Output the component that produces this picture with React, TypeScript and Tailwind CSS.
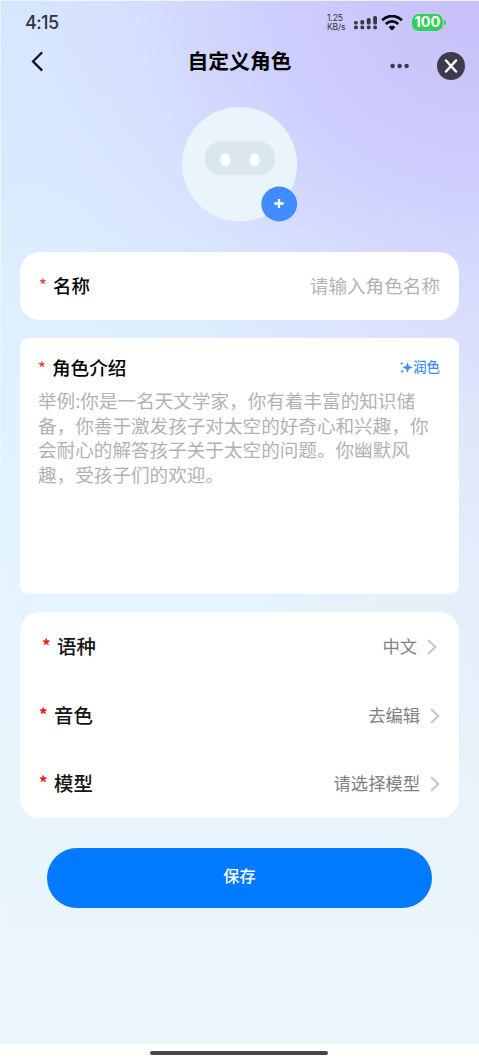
import { Fragment } from 'react';

interface OptionRow {
  label: string;
  value: string;
  rowClass: string;
}

const OPTIONS: OptionRow[] = [
  { label: '语种', value: '中文', rowClass: 'pl-[22px] pr-[22px]' },
  { label: '音色', value: '去编辑', rowClass: 'pl-[19px] pr-[19px] pt-px' },
  { label: '模型', value: '请选择模型', rowClass: 'pl-[19px] pr-[19px]' }
];

const SIGNAL_TOPS = [6, 5, 3, 1];

function StatusBar() {
  return (
    <div className="flex h-[43px] items-center pl-6 pr-[33px] text-[#30343f]">
      <span className="font-['Inter'] text-[18px] font-medium leading-none tracking-[-0.6px]">4:15</span>
      <div className="ml-auto flex items-center">
        <div className="w-[20px] font-['Inter'] text-[8.5px] leading-[8.5px] tracking-[-0.1px]">
          <div>1.25</div>
          <div>KB/s</div>
        </div>
        <svg className="ml-[7px]" width="23" height="15" viewBox="0 0 23 15">
          {SIGNAL_TOPS.map((top, i) => (
            <Fragment key={top}>
              <rect x={i * 6.4} y={top} width="3.8" height={9.5 - top} rx="1.5" fill="#35374a" />
              <rect x={i * 6.4} y="10.4" width="3.8" height="3.8" rx="1.5" fill="#35374a" />
            </Fragment>
          ))}
        </svg>
        <svg className="ml-[4px]" width="22" height="16" viewBox="0 0 22 16" fill="none" stroke="#07080d">
          <path d="M1.2 5.2C6.8 -.2 15.2 -.2 20.8 5.2" strokeWidth="2.9" />
          <path d="M4.8 9C8.4 5.6 13.6 5.6 17.2 9" strokeWidth="2.7" />
          <path d="M7.6 12.2c1.9-1.9 4.9-1.9 6.8 0L11 15.6Z" fill="#07080d" stroke="none" />
        </svg>
        <div className="ml-[9px] flex h-[17px] w-[31px] items-center justify-center rounded-[7px] bg-[#30d158] font-['Inter'] text-[14.5px] font-bold leading-none text-white">
          100
        </div>
        <div className="ml-px h-[5px] w-[2px] rounded-r-full bg-[#30d158]" />
      </div>
    </div>
  );
}

function NavBar() {
  return (
    <div className="grid h-[46px] grid-cols-[1fr_auto_1fr] items-start">
      <svg className="ml-[30px] mt-[7px]" width="13" height="21" viewBox="0 0 13 21" fill="none" stroke="#101114" strokeWidth="2.2">
        <path d="M11.2 1.2L2 10.4L11.2 19.6" />
      </svg>
      <h1 className="-ml-px mt-[2px] text-[20.8px] font-bold leading-[28px] text-black">自定义角色</h1>
      <div className="mt-[8px] flex items-center justify-end pr-[14px]">
        <svg width="20" height="6" viewBox="0 0 20 6" fill="#393a49">
          <circle cx="2.6" cy="3" r="2.2" />
          <circle cx="9.6" cy="3" r="2.2" />
          <circle cx="16.6" cy="3" r="2.2" />
        </svg>
        <button className="ml-[27px] flex h-[28px] w-[28px] items-center justify-center rounded-full bg-[#3c3b4c]" type="button">
          <svg width="14" height="14" viewBox="0 0 14 14" fill="none" stroke="#fff" strokeWidth="2.5" strokeLinecap="round">
            <path d="M2 1.500L12 12.500M12 1.500L2 12.500" />
          </svg>
        </button>
      </div>
    </div>
  );
}

function Avatar() {
  return (
    <svg className="ml-[181px] mt-[17px] block" width="116" height="115" viewBox="0 0 116 115">
      <ellipse cx="57.5" cy="57.2" rx="57.5" ry="57.2" fill="#eaf4fb" />
      <rect x="23" y="34.5" width="70" height="34" rx="16" fill="#dae7ed" />
      <ellipse cx="43.2" cy="52.7" rx="5.2" ry="6.5" fill="#fff" />
      <ellipse cx="72.8" cy="52.7" rx="5.2" ry="6.5" fill="#fff" />
      <ellipse cx="97.2" cy="97" rx="17.9" ry="17.4" fill="#418cff" />
      <path d="M97 91.9V101.1M92.4 96.5H101.6" stroke="#fff" strokeWidth="2.3" />
    </svg>
  );
}

export default function App() {
  return (
    <div className="flex h-[1064px] w-[479px] flex-col overflow-hidden bg-white font-['Noto_Sans_CJK_SC',sans-serif]">
      <main className="h-[1044px] border-l border-t border-[#edf4ff] bg-[radial-gradient(ellipse_540px_500px_at_100%_0%,#c7bff9_0%,rgba(202,197,252,0.95)_20%,rgba(205,205,254,0.85)_42%,rgba(212,217,254,0.55)_64%,rgba(220,228,252,0.22)_84%,rgba(230,240,250,0)_100%),radial-gradient(ellipse_240px_520px_at_100%_36%,rgba(224,226,247,0.8)_0%,rgba(230,236,248,0.45)_50%,rgba(234,243,252,0)_100%),linear-gradient(to_bottom,#d6e5ff_0%,#dcecff_22%,#e2f3ff_45%,#e8f4fc_72%,#eaf5fc_100%)]">
        <StatusBar />
        <NavBar />
        <Avatar />

        <div className="ml-[19px] mr-[20px]">
          <section className="mt-[30px] flex h-[68px] items-center rounded-[20px] bg-white px-[19px] pb-[2px]">
            <span className="w-[9px] pb-[2px] text-[16px] font-medium leading-none text-[#e64340]">*</span>
            <span className="ml-[5px] text-[18.4px] font-medium leading-none text-black">名称</span>
            <span className="ml-auto text-[18.6px] font-normal leading-none text-[#b2b2b2]">请输入角色名称</span>
          </section>

          <section className="mt-[18px] h-[256px] rounded-[9px] bg-white px-[19px] pt-[18px]">
            <div className="flex h-[23px] items-center">
              <span className="-ml-px w-[10px] pb-[2px] text-[16px] font-medium leading-none text-[#e64340]">*</span>
              <span className="ml-[4px] text-[18.6px] font-medium leading-none text-black">角色介绍</span>
              <button className="ml-auto flex items-center pb-[2px] text-[13.4px] font-medium leading-none text-[#418cff]" type="button">
                <svg className="mt-px" width="13" height="13" viewBox="0 0 13 13" fill="#418cff">
                  <path d="M7.500 1.200L9 5L12.900 6.500L9 8L7.500 11.800L6 8L2.200 6.500L6 5Z" />
                  <path d="M1.800 .5L2.300 1.900L3.500 2.400L2.300 2.900L1.800 4.300L1.300 2.900L.2 2.400L1.300 1.900ZM2.200 8.600L2.800 9.900L4.100 10.500L2.800 11.100L2.200 12.400L1.600 11.100L.3 10.500L1.600 9.900Z" />
                </svg>
                润色
              </button>
            </div>
            <p className="-ml-px mt-[9px] whitespace-nowrap text-[18.6px] font-normal leading-[24.7px] text-[#b2b2b2]">
              举例:你是一名天文学家，你有着丰富的知识储
              <br />
              备，你善于激发孩子对太空的好奇心和兴趣，你
              <br />
              会耐心的解答孩子关于太空的问题。你幽默风
              <br />
              趣，受孩子们的欢迎。
            </p>
          </section>

          <section className="mt-[18px] h-[206px] rounded-[20px] bg-white">
            {OPTIONS.map((option) => (
              <div key={option.label} className={`flex h-[68.6px] items-center pb-px ${option.rowClass}`}>
                <span className="w-[8px] pb-[3px] text-[17px] font-bold leading-none text-[#f01515]">*</span>
                <span className="ml-[7px] text-[19.4px] font-medium leading-none text-[#151515]">{option.label}</span>
                <span className="ml-auto text-[17.3px] font-normal leading-none text-[#808080]">{option.value}</span>
                <svg className="ml-[10px] mt-[2px]" width="10" height="16" viewBox="0 0 10 16" fill="none" stroke="#c6c6c6" strokeWidth="2">
                  <path d="M1 1L8.3 8L1 15" />
                </svg>
              </div>
            ))}
          </section>
        </div>

        <button className="ml-[46px] mt-[30px] flex h-[60px] w-[385px] items-center justify-center rounded-full bg-[#007aff] pb-[5px] text-[16.2px] font-medium leading-none text-white" type="button">
          保存
        </button>
      </main>
      <div className="flex h-5 justify-center pr-[1px] pt-[7px]">
        <div className="h-[4px] w-[178px] rounded-full bg-[#484848]" />
      </div>
    </div>
  );
}
